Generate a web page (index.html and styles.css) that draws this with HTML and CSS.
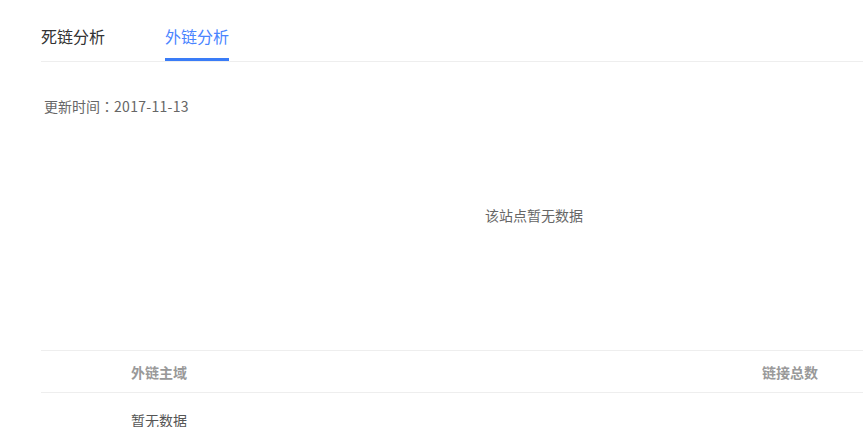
FILE: index.html
```html
<!DOCTYPE html>
<html lang="zh-CN">
<head>
<meta charset="utf-8">
<title>外链分析</title>
<link rel="stylesheet" href="styles.css">
</head>
<body>
<div class="page">
  <nav class="tabs">
    <div class="tab">死链分析</div>
    <div class="tab active">外链分析</div>
  </nav>
  <div class="update">更新时间<span class="colon" lang="ja">：</span><span class="date">2017-11-13</span></div>
  <div class="empty">该站点暂无数据</div>
  <div class="table">
    <div class="row head">
      <div class="cell pad"></div>
      <div class="cell">外链主域</div>
      <div class="cell">链接总数</div>
    </div>
    <div class="row body">
      <div class="cell pad"></div>
      <div class="cell">暂无数据</div>
      <div class="cell"></div>
    </div>
  </div>
</div>
</body>
</html>
```

FILE: styles.css
```css
html, body {
  margin: 0;
  padding: 0;
  background: #fff;
  overflow: hidden;
}
body {
  font-family: "Noto Sans CJK SC", "Microsoft YaHei", "Noto Sans", sans-serif;
  color: #333;
}
.page {
  margin-left: 41px;
  width: 986px;
}
.tabs {
  display: flex;
  gap: 60px;
  height: 61px;
  border-bottom: 1px solid #eeeeee;
}
.tab {
  box-sizing: border-box;
  height: 61px;
  padding-top: 24px;
  font-size: 16px;
  line-height: 24px;
  color: #333;
}
.tab.active {
  color: #4a84ff;
  border-bottom: 3px solid #3a7cf7;
}
.update {
  margin-top: 34px;
  padding-left: 3px;
  font-size: 14px;
  line-height: 20px;
  color: #666;
}
.colon {
  font-family: "Noto Sans CJK JP", "Noto Sans CJK SC", sans-serif;
}
.date {
  letter-spacing: 0.3px;
}
.empty {
  padding-top: 89px;
  padding-bottom: 125px;
  text-align: center;
  font-size: 14px;
  line-height: 20px;
  color: #666;
}
.table {
  border-top: 1px solid #eeeeee;
}
.row {
  display: grid;
  grid-template-columns: 90px 631px 1fr;
  font-size: 14px;
  line-height: 20px;
}
.row.head {
  height: 41px;
  align-items: center;
  border-bottom: 1px solid #eeeeee;
  color: #999;
  font-weight: bold;
}
.row.body {
  padding-top: 17px;
  color: #555;
}
```
